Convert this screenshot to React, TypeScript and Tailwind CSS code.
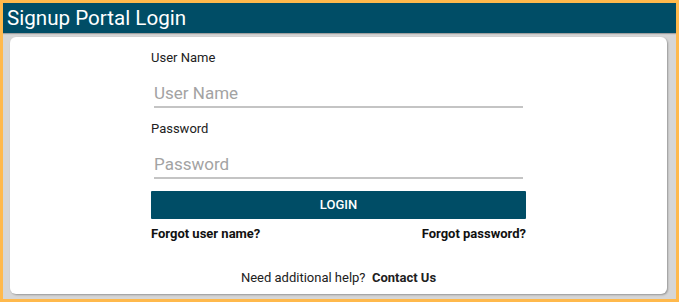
import React from "react";

export default function App() {
  return (
    <div
      className="w-[679px] h-[302px] border-[3px] border-[#ffb94c] bg-[#d6d6d6] flex flex-col overflow-hidden"
      style={{ fontFamily: "Roboto, 'Noto Sans', sans-serif" }}
    >
      <div className="h-[30px] shrink-0 bg-[#004d66] text-white text-[20.6px] leading-[30px] pl-[4px] shadow-[0_1px_1px_rgba(0,0,0,0.25)]">
        Signup Portal Login
      </div>
      <div className="flex-1 ml-[7px] mr-[9px] mt-[4px] mb-[5px] bg-white rounded-[6px] shadow-[1px_1px_2px_rgba(0,0,0,0.3)]">
        <div className="w-[375px] mx-auto pt-[11px] flex flex-col">
          <label className="h-[20px] leading-[20px] text-[13px] text-[#212121]">User Name</label>
          <input
            placeholder="User Name"
            className="mt-[8px] mx-[3px] h-[32px] pt-[3px] px-0 border-b-2 border-[#c4c4c4] text-[17px] text-[#212121] placeholder:text-[#a3a3a3] outline-none bg-transparent"
          />
          <label className="mt-[11px] h-[20px] leading-[20px] text-[13px] text-[#212121]">Password</label>
          <input
            type="password"
            placeholder="Password"
            className="mt-[8px] mx-[3px] h-[32px] pt-[3px] px-0 border-b-2 border-[#c4c4c4] text-[17px] text-[#212121] placeholder:text-[#a3a3a3] outline-none bg-transparent"
          />
          <button className="mt-[12px] h-[28px] bg-[#004d66] text-white text-[13px] font-medium rounded-[1px]">
            LOGIN
          </button>
          <div className="mt-[7px] h-[16px] flex justify-between text-[13px] font-bold text-[#111] leading-[16px]">
            <span>Forgot user name?</span>
            <span>Forgot password?</span>
          </div>
          <div className="mt-[28px] h-[16px] leading-[16px] text-center text-[13px] text-[#212121]">
            Need additional help?&nbsp; <span className="font-bold">Contact Us</span>
          </div>
        </div>
      </div>
    </div>
  );
}
